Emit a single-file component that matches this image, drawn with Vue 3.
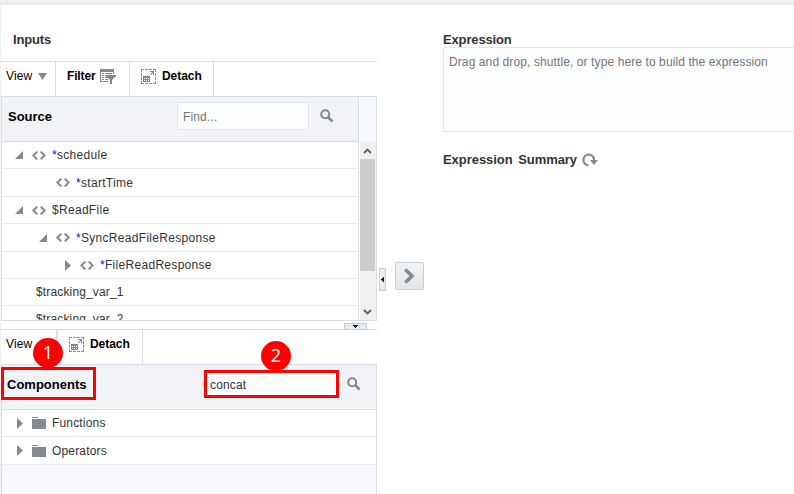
<script setup>
import { h } from 'vue'

const rows = [
  { name: 'schedule', level: 0, state: 'open', tag: true, star: true, height: 27 },
  { name: 'startTime', level: 1, state: 'leaf', tag: true, star: true, height: 28 },
  { name: '$ReadFile', level: 0, state: 'open', tag: true, height: 27 },
  { name: 'SyncReadFileResponse', level: 1, state: 'open', tag: true, star: true, height: 28 },
  { name: 'FileReadResponse', level: 2, state: 'closed', tag: true, star: true, height: 27 },
  { name: '$tracking_var_1', level: 0, state: 'leaf', height: 27 },
  { name: '$tracking_var_2', level: 0, state: 'leaf', height: 27 },
]
const folders = ['Functions', 'Operators']

const shapes = {
  detach: [15, 15, [
    ['path', { d: 'M0 .5h3M4 .5h3M8 .5h3M12 .5h3M0 14.5h3M4 14.5h3M8 14.5h3M12 14.5h3M.5 0v3M.5 4v3M.5 8v3M.5 12v3M14.5 0v3M14.5 4v3M14.5 8v3M14.5 12v3', stroke: '#8a8f94', fill: 'none' }],
    ['path', { d: 'M2 7h7v6H2zM3 9v1h1V9zM5 9v1h1V9zM7 9v1h1V9zM3 11v1h1v-1zM5 11v1h1v-1zM7 11v1h1v-1z', fill: '#858a8f', 'fill-rule': 'evenodd' }],
    ['path', { d: 'M9 2h4v4h-1V4L9.7 6.3 9 5.6 11.3 3H9z', fill: '#858a8f' }],
  ]],
  filter: [16, 15, [
    ['path', { d: 'M0 0h14v5h-1V3H1v9h7v1H0z', fill: '#858a8f' }],
    ['path', { d: 'M2 4.5h2M5 4.5h7M2 6.5h2M2 8.5h2M5 8.5h3M2 10.5h2M5 10.5h3M5 6.5h1', stroke: '#858a8f', fill: 'none' }],
    ['path', { d: 'M6 6h10v1l-4 4v4h-2v-4L6 7z', fill: '#858a8f' }],
  ]],
  search: [14, 14, [
    ['circle', { cx: 5.2, cy: 5.2, r: 4, fill: 'none', stroke: '#858a8f', 'stroke-width': 2.1 }],
    ['path', { d: 'M8.2 8.2l4.4 4.4', stroke: '#858a8f', 'stroke-width': 2.7 }],
  ]],
  tag: [14, 9, [
    ['path', { d: 'M5.3 .6L1.4 4.5l3.9 3.9M8.7 .6l3.9 3.9-3.9 3.9', fill: 'none', stroke: '#858a8f', 'stroke-width': 2 }],
  ]],
  folder: [14, 12, [
    ['path', { d: 'M0 0h5.5l1 1H0zM0 2h14v10H0z', fill: '#858a8f' }],
  ]],
  open: [8, 8, [['path', { d: 'M8 0v8H0z', fill: '#858a8f' }]]],
  closed: [6, 11, [['path', { d: 'M0 0l6 5.5L0 11z', fill: '#858a8f' }]]],
  drop: [9, 7, [['path', { d: 'M0 0h9L4.5 7z', fill: '#858a8f' }]]],
  smallDown: [5, 3, [['path', { d: 'M0 0h5v1H4v1H3v1H2V2H1V1H0z', fill: '#000' }]]],
  smallLeft: [3, 5, [['path', { d: 'M3 0v5H2V4H1V3H0V2h1V1h1V0z', fill: '#000' }]]],
  shuttle: [10, 16, [['path', { d: 'M1.3 1.5L8 8l-6.7 6.5', fill: 'none', stroke: '#858a8f', 'stroke-width': 3.6 }]]],
  up: [9, 6, [['path', { d: 'M1 5l3.5-3.5L8 5', fill: 'none', stroke: '#606060', 'stroke-width': 1.8 }]]],
  down: [9, 6, [['path', { d: 'M1 1l3.5 3.5L8 1', fill: 'none', stroke: '#606060', 'stroke-width': 1.8 }]]],
  refresh: [16, 14, [
    ['path', { d: 'M6.3 12.2A5.3 5.3 0 1 1 12 7', fill: 'none', stroke: '#858a8f', 'stroke-width': 2.3 }],
    ['path', { d: 'M8 7h8l-4.2 5z', fill: '#858a8f' }],
  ]],
}

function Glyph({ name }) {
  const [w, ht, parts] = shapes[name]
  return h('svg', { width: w, height: ht, viewBox: `0 0 ${w} ${ht}`, 'aria-hidden': 'true', style: { display: 'block', flex: 'none' } },
    parts.map(([t, a]) => h(t, a)))
}
Glyph.props = ['name']
</script>

<template>
  <main class="page">
    <div class="topbar"></div>
    <div class="columns">
      <section class="inputs">
        <h2 class="heading">Inputs</h2>
        <div class="toolbar">
          <div class="tool view"><span>View</span><Glyph name="drop" /></div>
          <div class="tool filter"><b>Filter</b><Glyph name="filter" /></div>
          <div class="tool detach"><Glyph name="detach" /><b>Detach</b></div>
        </div>
        <div class="source">
          <div class="table">
            <div class="table-head">
              <b class="title">Source</b>
              <input class="find" placeholder="Find..." />
              <Glyph name="search" class="search" />
            </div>
            <div class="rows">
              <div v-for="r in rows" :key="r.name" class="row" :class="['level' + r.level, { plain: !r.tag }]" :style="{ height: r.height + 'px' }">
                <span v-if="r.tag" class="toggle"><Glyph v-if="r.state !== 'leaf'" :name="r.state" /></span>
                <Glyph v-if="r.tag" name="tag" class="tag" />
                <span class="name"><i v-if="r.star">*</i>{{ r.name }}</span>
              </div>
            </div>
          </div>
          <div class="scroll">
            <div class="scroll-head"></div>
            <div class="track">
              <div class="arrow"><Glyph name="up" /></div>
              <div class="thumb"></div>
              <div class="arrow last"><Glyph name="down" /></div>
            </div>
          </div>
        </div>
        <div class="splitter"><div class="grip"><Glyph name="smallDown" /></div></div>
        <div class="toolbar second">
          <div class="tool view"><span>View</span></div>
          <div class="tool detach"><Glyph name="detach" /><b>Detach</b></div>
          <div class="marker one">1</div>
        </div>
        <div class="components">
          <div class="table-head">
            <b class="title boxed">Components</b>
            <input class="concat" value="concat" />
            <Glyph name="search" class="search" />
            <div class="marker two">2</div>
          </div>
          <div v-for="f in folders" :key="f" class="row folder">
            <span class="toggle"><Glyph name="closed" /></span>
            <Glyph name="folder" class="icon" />
            <span class="name">{{ f }}</span>
          </div>
        </div>
      </section>
      <div class="middle">
        <div class="vgrip"><Glyph name="smallLeft" /></div>
        <button class="shuttle"><Glyph name="shuttle" /></button>
      </div>
      <section class="expression">
        <h2 class="label">Expression</h2>
        <textarea class="editor" placeholder="Drag and drop, shuttle, or type here to build the expression"></textarea>
        <div class="summary"><h2>Expression Summary</h2><Glyph name="refresh" /></div>
      </section>
    </div>
  </main>
</template>

<style>
body { margin: 0; overflow: hidden; background: #fff; }
</style>

<style scoped>
* { box-sizing: border-box; }
.page { width: 794px; height: 494px; overflow: hidden; color: #333; font: 12px/16px "Liberation Sans", Arial, sans-serif; letter-spacing: .15px; }
.topbar { height: 5px; background: #ebebeb; border-top: 2px solid #f2f2f2; }
.columns { display: flex; height: 489px; }
h2 { margin: 0; font-size: 13px; line-height: 16px; font-weight: bold; letter-spacing: -.15px; }
b { color: #000; letter-spacing: -.05px; }
.inputs { width: 377px; flex: none; border-left: 1px solid #f1f1f1; }
.heading { height: 56px; padding: 27px 0 0 12px; }
.toolbar { display: flex; height: 35px; border-top: 1px solid #d6dfe6; position: relative; color: #000; }
.tool { display: flex; align-items: center; padding-bottom: 6px; border-right: 1px solid #d6dfe6; height: 34px; }
.view { width: 55px; padding-left: 5px; gap: 6px; }
.filter { width: 74px; padding-left: 11px; gap: 4px; }
.filter b { width: 29px; letter-spacing: -.15px; }
.detach { width: 84px; padding-left: 11px; gap: 6px; }
.second .view { width: 57px; border-right-width: 2px; }
.second .detach { width: 85px; }
.source { display: flex; height: 225px; border: 1px solid #d6dfe6; }
.table { width: 357px; border-right: 1px solid #d6dfe6; overflow: hidden; }
.table-head { position: relative; display: flex; height: 45px; background: #f1f3f7; border-bottom: 1px solid #d6dfe6; }
.title { width: 175px; padding: 12px 0 0 6px; font-size: 13px; letter-spacing: 0; }
input, textarea { font: inherit; letter-spacing: inherit; color: #333; outline: none; margin: 0; border-radius: 2px; background: #fcfdfe; border: 1px solid #dfe4e7; }
input::placeholder, textarea::placeholder { color: #757575; opacity: 1; }
.find { width: 132px; height: 28px; margin-top: 5px; padding: 2px 5px 0; }
.search { margin: 12px 0 0 11px; }
.row { display: flex; align-items: center; border-bottom: 1px solid #e9ebed; background: #fff; }
.level0 { padding-left: 13px; }
.level1 { padding-left: 37px; }
.level2 { padding-left: 61px; }
.plain { padding-left: 34px; }
.toggle { display: flex; width: 17px; justify-content: flex-start; }
.level2 .toggle { padding-left: 2px; }
.tag { margin-right: 6px; }
.name { letter-spacing: .3px; }
.plain .name { letter-spacing: .15px; }
.folder .name { letter-spacing: .17px; }
.name i { font-style: normal; color: #1a00ff; }
.scroll { flex: 1; }
.scroll-head { height: 45px; background: #f7f9fd; }
.track { display: flex; flex-direction: column; height: 178px; margin-left: 1px; background: #f0f0f0; }
.arrow { display: flex; align-items: center; justify-content: center; height: 17px; padding-right: 1px; }
.last { margin-top: auto; }
.thumb { height: 112px; background: #cdcdcd; margin-right: 1px; }
.splitter { height: 8px; padding: 2px 0 0 343px; }
.grip { position: relative; z-index: 1; display: flex; align-items: center; justify-content: center; width: 23px; height: 7px; background: #e9ecf0; border: 1px solid #c3ccd3; }
.components { height: 130px; border: 1px solid #d6dfe6; border-bottom: 0; background: #f7f9fd; }
.components .boxed { width: 95px; height: 33px; margin: 2px 0 0 -1px; padding: 7px 0 0 3px; border: 3px solid red; }
.concat { width: 135px; height: 28px; margin: 5px 0 0 108px; padding: 2px 3px 0; border: 3px solid red; border-radius: 0; }
.components .search { margin-left: 8px; }
.marker { position: absolute; z-index: 2; width: 30px; height: 30px; border-radius: 50%; background: red; color: #fff; font: 18px/28px "Open Sans", sans-serif; text-align: center; letter-spacing: 0; }
.one { left: 32px; top: 8px; }
.two { left: 259px; top: -24px; }
.folder { height: 28px; padding-left: 15px; }
.table-head + .folder { height: 27px; }
.folder .toggle { width: 15px; }
.icon { margin-right: 6px; }
.middle { display: flex; width: 66px; flex: none; padding: 257px 0 0 2px; gap: 9px; }
.vgrip { display: flex; align-items: center; justify-content: center; width: 7px; height: 23px; margin-top: 6px; background: #e9ecf0; border: 1px solid #c3ccd3; }
.shuttle { display: flex; align-items: center; justify-content: center; width: 29px; height: 28px; padding: 0 2px 0 0; border: 1px solid #c3ced6; border-radius: 2px; background: linear-gradient(#f0f3f5, #e2e6e9); }
.expression { width: 360px; flex: none; padding-top: 27px; }
.editor { display: block; width: 360px; height: 85px; margin-top: -1px; padding: 6px 5px; resize: none; letter-spacing: .1px; }
.summary { display: flex; gap: 5px; padding-top: 20px; align-items: center; }
.summary h2 { width: 134px; word-spacing: 2px; letter-spacing: -.05px; white-space: nowrap; }
</style>
